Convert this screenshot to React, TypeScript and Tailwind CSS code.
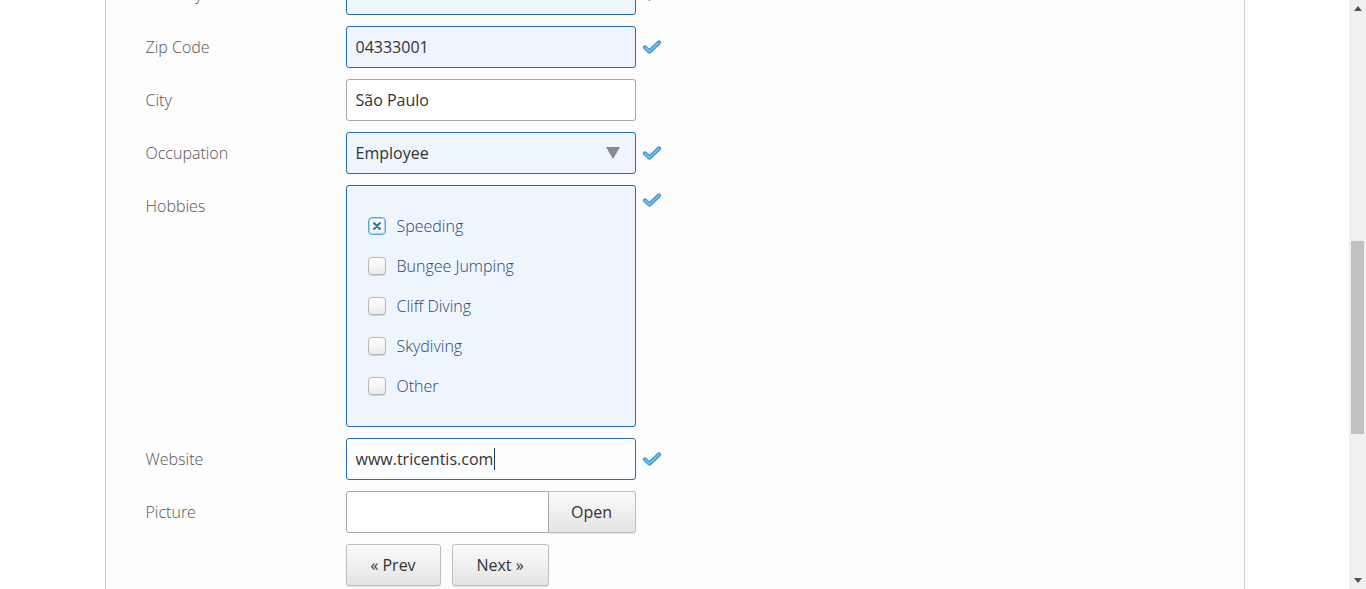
import React from 'react';

const font = { fontFamily: '"Open Sans", "Liberation Sans", sans-serif' };

const Check: React.FC = () => (
  <svg width="20" height="16" viewBox="0 0 20 16" className="shrink-0">
    <path d="M3 8.5 L7.5 12.5 L17 3.5" fill="none" stroke="#2f86c4" strokeWidth="4.2" strokeLinecap="round" strokeLinejoin="round" />
    <path d="M3 8.5 L7.5 12.5 L17 3.5" fill="none" stroke="#6cbcec" strokeWidth="2.4" strokeLinecap="round" strokeLinejoin="round" />
  </svg>
);

const Arrow: React.FC = () => (
  <svg width="16" height="14" viewBox="0 0 16 14" className="shrink-0">
    <path d="M1 1 H15 L8 13 Z" fill="#8a8a8a" />
  </svg>
);

const Row: React.FC<{ label: string; check?: boolean; top?: boolean; children: React.ReactNode }> = ({ label, check, top, children }) => (
  <div className="flex">
    <div className={`w-[240px] shrink-0 pl-[40px] text-[16px] font-light text-[#555] ${top ? 'pt-[9px]' : 'flex items-center h-[42px]'}`}>
      {label}
    </div>
    <div className="w-[290px] shrink-0">{children}</div>
    {check !== false && (
      <div className={`pl-[6px] ${top ? 'pt-[7px]' : 'flex items-center h-[42px]'}`}>{check && <Check />}</div>
    )}
  </div>
);

const Box: React.FC<{ valid?: boolean; focus?: boolean; children?: React.ReactNode }> = ({ valid, focus, children }) => (
  <div
    className={`h-[42px] rounded-[3px] border flex items-center px-[9px] text-[16px] text-[#333] ${
      valid ? 'bg-[#eef5fd] border-[#2a6aae]' : focus ? 'bg-[#fcfdff] border-[#2a6aae]' : 'bg-white border-[#a9a9a9]'
    }`}
  >
    {children}
  </div>
);

const Hobby: React.FC<{ label: string; checked?: boolean }> = ({ label, checked }) => (
  <div className="flex items-center h-5">
    <div
      className={`w-[18px] h-[18px] rounded-[4px] border flex items-center justify-center ${
        checked
          ? 'border-[#5ba7d8] bg-gradient-to-b from-white to-[#eef2f5] shadow-[inset_0_0_0_1px_#a8d2ee]'
          : 'border-[#b5b5b5] bg-gradient-to-b from-white to-[#ececec] shadow-[0_1px_0_#d0d0d0]'
      }`}
    >
      {checked && (
        <svg width="10" height="10" viewBox="0 0 10 10">
          <path d="M2 2 L8 8 M8 2 L2 8" stroke="#3a6f9a" strokeWidth="2" strokeLinecap="round" />
        </svg>
      )}
    </div>
    <span className="ml-[11px] text-[16px] font-light text-[#2c4570]">{label}</span>
  </div>
);

const Btn: React.FC<{ w: string; children: React.ReactNode }> = ({ w, children }) => (
  <button
    className={`${w} h-[42px] rounded-[3px] border border-[#bdbdbd] bg-gradient-to-b from-[#fbfbfb] to-[#e4e4e4] text-[16px] text-[#333] shadow-[0_1px_1px_rgba(0,0,0,0.12)]`}
  >
    {children}
  </button>
);

export default function App() {
  return (
    <div className="flex h-[589px] overflow-hidden bg-white" style={font}>
      <div className="flex-1 flex justify-center">
        <div className="w-[1140px] h-full border-x border-[#cfcfcf] bg-[#fdfdfd]">
          <div className="mt-[-27px] flex flex-col gap-[11px]">
            <Row label="Country" check>
              <Box valid>
                <span className="flex-1">Brazil</span>
                <span className="mr-[5px]"><Arrow /></span>
              </Box>
            </Row>
            <Row label="Zip Code" check>
              <Box valid>04333001</Box>
            </Row>
            <Row label="City">
              <Box>São Paulo</Box>
            </Row>
            <Row label="Occupation" check>
              <Box valid>
                <span className="flex-1">Employee</span>
                <span className="mr-[5px]"><Arrow /></span>
              </Box>
            </Row>
            <Row label="Hobbies" check top>
              <div className="h-[242px] rounded-[3px] border border-[#2a6aae] bg-[#eef5fd] pl-[21px] py-[30px] flex flex-col gap-5">
                <Hobby label="Speeding" checked />
                <Hobby label="Bungee Jumping" />
                <Hobby label="Cliff Diving" />
                <Hobby label="Skydiving" />
                <Hobby label="Other" />
              </div>
            </Row>
            <Row label="Website" check>
              <Box focus>
                www.tricentis.com
                <span className="w-px h-[22px] bg-[#1d3b6a] ml-[1px]" />
              </Box>
            </Row>
            <Row label="Picture">
              <div className="flex h-[42px]">
                <div className="flex-1 rounded-l-[3px] border border-[#a9a9a9] bg-white" />
                <button className="w-[87px] rounded-r-[3px] border border-l-0 border-[#bdbdbd] bg-gradient-to-b from-[#fbfbfb] to-[#e4e4e4] text-[16px] text-[#333] shadow-[0_1px_1px_rgba(0,0,0,0.12)]">
                  Open
                </button>
              </div>
            </Row>
            <Row label="" check={false}>
              <div className="flex gap-[11px]">
                <Btn w="w-[95px]">« Prev</Btn>
                <Btn w="w-[97px]">Next »</Btn>
              </div>
            </Row>
          </div>
        </div>
      </div>
      {/* scrollbar */}
      <div className="w-[17px] h-full bg-[#f0f0f0] flex flex-col items-center">
        <div className="h-[17px] flex items-center justify-center">
          <svg width="8" height="5" viewBox="0 0 8 5"><path d="M0 5 L4 0 L8 5 Z" fill="#505050" /></svg>
        </div>
        <div className="h-[224px]" />
        <div className="w-[13px] h-[193px] bg-[#c1c1c1]" />
        <div className="flex-1" />
        <div className="h-[17px] flex items-center justify-center">
          <svg width="8" height="5" viewBox="0 0 8 5"><path d="M0 0 L8 0 L4 5 Z" fill="#505050" /></svg>
        </div>
      </div>
    </div>
  );
}
